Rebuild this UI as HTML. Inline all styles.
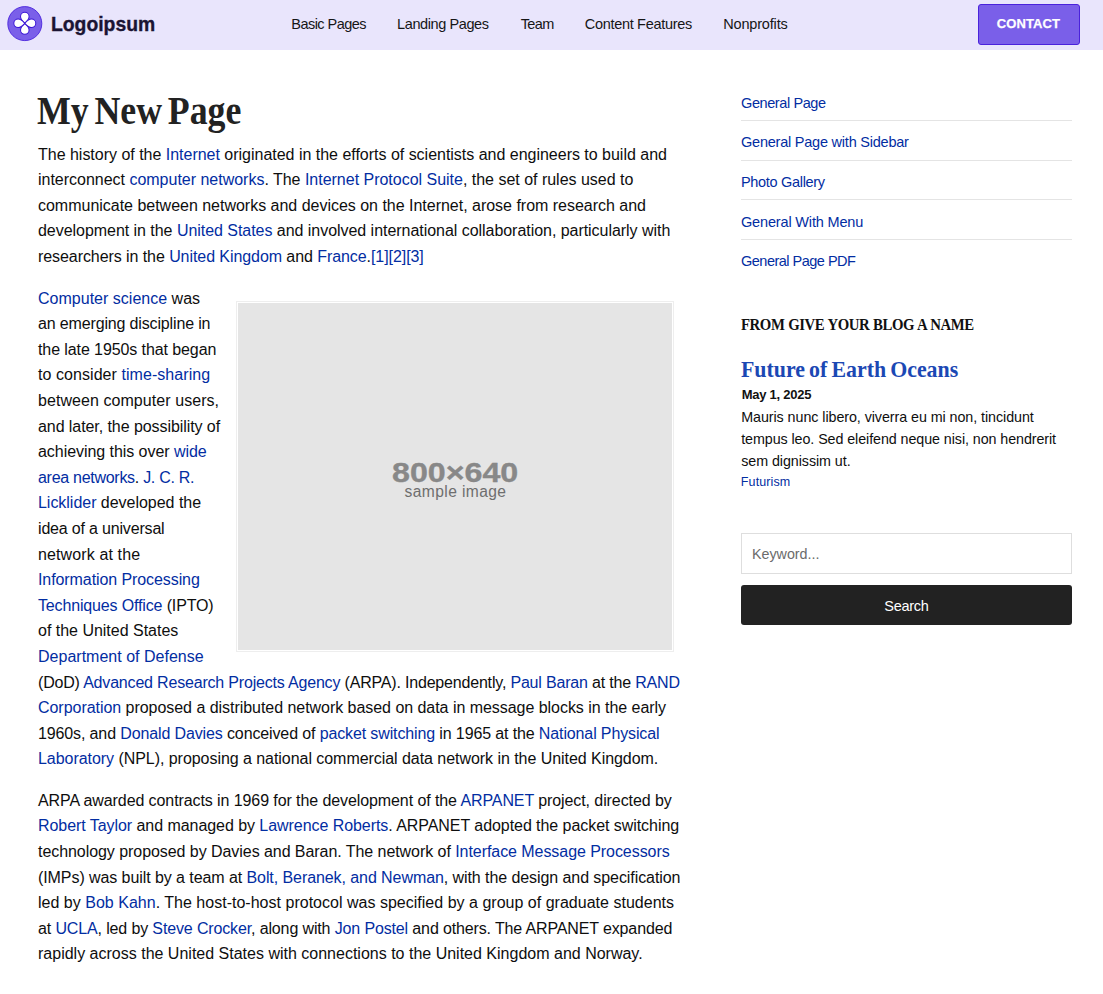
<!DOCTYPE html>
<html><head><meta charset="utf-8"><title>My New Page</title>
<style>
html,body{margin:0;padding:0;background:#ffffff;width:1103px;height:994px;overflow:hidden;position:relative}
.t{position:absolute;white-space:pre;line-height:1;}
.t a{color:#022da2;text-decoration:none}
</style></head><body>

<div style="position:absolute;left:0;top:0;width:1103px;height:50px;background:#e9e5fc"></div>
<svg style="position:absolute;left:0;top:0" width="50" height="50" viewBox="0 0 50 50">
  <circle cx="24.8" cy="23.6" r="17" fill="#7a5fe9" stroke="#4a22dc" stroke-width="0.9"/>
  <g fill="#ffffff" stroke="#3c18d6" stroke-width="1.1" transform="translate(24.8 23.3) scale(0.93) translate(-24.8 -23.6)">
    <path d="M24.8 23.6 C21.6 20.8 20.2 18.6 20.2 16.4 A4.6 4.6 0 0 1 29.4 16.4 C29.4 18.6 28 20.8 24.8 23.6Z"/>
    <path d="M24.8 23.6 C21.6 26.4 20.2 28.6 20.2 30.8 A4.6 4.6 0 0 0 29.4 30.8 C29.4 28.6 28 26.4 24.8 23.6Z"/>
    <path d="M24.8 23.6 C22 20.4 19.8 19 17.6 19 A4.6 4.6 0 0 0 17.6 28.2 C19.8 28.2 22 26.8 24.8 23.6Z"/>
    <path d="M24.8 23.6 C27.6 20.4 29.8 19 32 19 A4.6 4.6 0 0 1 32 28.2 C29.8 28.2 27.6 26.8 24.8 23.6Z"/>
  </g>
</svg>
<div style="position:absolute;left:978px;top:4px;width:100px;height:39px;background:#7a5fe9;border:1px solid #4a22dc;border-radius:3px"></div>
<div style="position:absolute;left:236px;top:301px;width:434px;height:347px;border:1px solid #eeeeee;padding:1px;background:#ffffff"><div style="width:434px;height:347px;background:#e5e5e5"></div></div>
<div style="position:absolute;left:741px;top:120px;width:331px;height:1px;background:#e4e4e4"></div>
<div style="position:absolute;left:741px;top:160px;width:331px;height:1px;background:#e4e4e4"></div>
<div style="position:absolute;left:741px;top:199px;width:331px;height:1px;background:#e4e4e4"></div>
<div style="position:absolute;left:741px;top:239px;width:331px;height:1px;background:#e4e4e4"></div>
<div style="position:absolute;left:741px;top:533px;width:329px;height:39px;border:1px solid #dedede;background:#fff"></div>
<div style="position:absolute;left:741px;top:585px;width:331px;height:40px;background:#222222;border-radius:3px"></div>

<div class="t" id="t0" style="left:50.98px;top:14.11px;font-family:'Liberation Sans', sans-serif;font-size:20.5px;font-weight:700;color:#1b1433;letter-spacing:0.000px;transform:scaleX(0.9432);transform-origin:0 0;-webkit-text-stroke:0.35px #1b1433;"><span class="mk" style="display:inline-block;width:0;height:0"></span><span class="sp">Logoipsum</span></div><div class="t" id="t1" style="left:291.28px;top:16.91px;font-family:'Liberation Sans', sans-serif;font-size:14.5px;font-weight:400;color:#161616;letter-spacing:-0.540px;"><span class="mk" style="display:inline-block;width:0;height:0"></span><span class="sp">Basic Pages</span></div><div class="t" id="t2" style="left:397.06px;top:16.91px;font-family:'Liberation Sans', sans-serif;font-size:14.5px;font-weight:400;color:#161616;letter-spacing:-0.400px;"><span class="mk" style="display:inline-block;width:0;height:0"></span><span class="sp">Landing Pages</span></div><div class="t" id="t3" style="left:520.72px;top:16.91px;font-family:'Liberation Sans', sans-serif;font-size:14.5px;font-weight:400;color:#161616;letter-spacing:-0.600px;"><span class="mk" style="display:inline-block;width:0;height:0"></span><span class="sp">Team</span></div><div class="t" id="t4" style="left:584.78px;top:16.91px;font-family:'Liberation Sans', sans-serif;font-size:14.5px;font-weight:400;color:#161616;letter-spacing:-0.307px;"><span class="mk" style="display:inline-block;width:0;height:0"></span><span class="sp">Content Features</span></div><div class="t" id="t5" style="left:723.28px;top:16.91px;font-family:'Liberation Sans', sans-serif;font-size:14.5px;font-weight:400;color:#161616;letter-spacing:-0.178px;"><span class="mk" style="display:inline-block;width:0;height:0"></span><span class="sp">Nonprofits</span></div><div class="t" id="t6" style="left:996.86px;top:17.31px;font-family:'Liberation Sans', sans-serif;font-size:13px;font-weight:700;color:#ffffff;letter-spacing:0.067px;-webkit-text-stroke:0.25px #ffffff;"><span class="mk" style="display:inline-block;width:0;height:0"></span><span class="sp">CONTACT</span></div><div class="t" id="t7" style="left:37.28px;top:90.90px;font-family:'Liberation Serif', serif;font-size:39px;font-weight:700;color:#222222;letter-spacing:0.000px;transform:scaleX(0.9180);transform-origin:0 0;word-spacing:-3.5px;"><span class="mk" style="display:inline-block;width:0;height:0"></span><span class="sp">My New Page</span></div><div class="t" id="t8" style="left:38.00px;top:146.60px;font-family:'Liberation Sans', sans-serif;font-size:16px;font-weight:400;color:#0e0e0e;letter-spacing:-0.015px;"><span class="mk" style="display:inline-block;width:0;height:0"></span><span class="sp">The history of the <a>Internet</a> originated in the efforts of scientists and engineers to build and</span></div><div class="t" id="t9" style="left:38.00px;top:172.20px;font-family:'Liberation Sans', sans-serif;font-size:16px;font-weight:400;color:#0e0e0e;letter-spacing:-0.014px;"><span class="mk" style="display:inline-block;width:0;height:0"></span><span class="sp">interconnect <a>computer networks</a>. The <a>Internet Protocol Suite</a>, the set of rules used to</span></div><div class="t" id="t10" style="left:38.00px;top:197.81px;font-family:'Liberation Sans', sans-serif;font-size:16px;font-weight:400;color:#0e0e0e;letter-spacing:-0.015px;"><span class="mk" style="display:inline-block;width:0;height:0"></span><span class="sp">communicate between networks and devices on the Internet, arose from research and</span></div><div class="t" id="t11" style="left:38.00px;top:223.40px;font-family:'Liberation Sans', sans-serif;font-size:16px;font-weight:400;color:#0e0e0e;letter-spacing:-0.040px;"><span class="mk" style="display:inline-block;width:0;height:0"></span><span class="sp">development in the <a>United States</a> and involved international collaboration, particularly with</span></div><div class="t" id="t12" style="left:38.00px;top:249.01px;font-family:'Liberation Sans', sans-serif;font-size:16px;font-weight:400;color:#0e0e0e;letter-spacing:-0.072px;"><span class="mk" style="display:inline-block;width:0;height:0"></span><span class="sp">researchers in the <a>United Kingdom</a> and <a>France</a>.<a>[1]</a><a>[2]</a><a>[3]</a></span></div><div class="t" id="t13" style="left:38.00px;top:290.60px;font-family:'Liberation Sans', sans-serif;font-size:16px;font-weight:400;color:#0e0e0e;letter-spacing:0.011px;"><span class="mk" style="display:inline-block;width:0;height:0"></span><span class="sp"><a>Computer science</a> was</span></div><div class="t" id="t14" style="left:38.00px;top:316.20px;font-family:'Liberation Sans', sans-serif;font-size:16px;font-weight:400;color:#0e0e0e;letter-spacing:-0.150px;"><span class="mk" style="display:inline-block;width:0;height:0"></span><span class="sp">an emerging discipline in</span></div><div class="t" id="t15" style="left:38.00px;top:341.81px;font-family:'Liberation Sans', sans-serif;font-size:16px;font-weight:400;color:#0e0e0e;letter-spacing:-0.092px;"><span class="mk" style="display:inline-block;width:0;height:0"></span><span class="sp">the late 1950s that began</span></div><div class="t" id="t16" style="left:38.00px;top:367.40px;font-family:'Liberation Sans', sans-serif;font-size:16px;font-weight:400;color:#0e0e0e;letter-spacing:0.061px;"><span class="mk" style="display:inline-block;width:0;height:0"></span><span class="sp">to consider <a>time-sharing</a></span></div><div class="t" id="t17" style="left:38.00px;top:393.01px;font-family:'Liberation Sans', sans-serif;font-size:16px;font-weight:400;color:#0e0e0e;letter-spacing:0.064px;"><span class="mk" style="display:inline-block;width:0;height:0"></span><span class="sp">between computer users,</span></div><div class="t" id="t18" style="left:38.00px;top:418.60px;font-family:'Liberation Sans', sans-serif;font-size:16px;font-weight:400;color:#0e0e0e;letter-spacing:-0.071px;"><span class="mk" style="display:inline-block;width:0;height:0"></span><span class="sp">and later, the possibility of</span></div><div class="t" id="t19" style="left:38.00px;top:444.20px;font-family:'Liberation Sans', sans-serif;font-size:16px;font-weight:400;color:#0e0e0e;letter-spacing:-0.052px;"><span class="mk" style="display:inline-block;width:0;height:0"></span><span class="sp">achieving this over <a>wide</a></span></div><div class="t" id="t20" style="left:38.00px;top:469.81px;font-family:'Liberation Sans', sans-serif;font-size:16px;font-weight:400;color:#0e0e0e;letter-spacing:-0.282px;"><span class="mk" style="display:inline-block;width:0;height:0"></span><span class="sp"><a>area networks</a>. <a>J. C. R.</a></span></div><div class="t" id="t21" style="left:38.00px;top:495.40px;font-family:'Liberation Sans', sans-serif;font-size:16px;font-weight:400;color:#0e0e0e;letter-spacing:-0.027px;"><span class="mk" style="display:inline-block;width:0;height:0"></span><span class="sp"><a>Licklider</a> developed the</span></div><div class="t" id="t22" style="left:38.00px;top:521.01px;font-family:'Liberation Sans', sans-serif;font-size:16px;font-weight:400;color:#0e0e0e;letter-spacing:-0.178px;"><span class="mk" style="display:inline-block;width:0;height:0"></span><span class="sp">idea of a universal</span></div><div class="t" id="t23" style="left:38.00px;top:546.60px;font-family:'Liberation Sans', sans-serif;font-size:16px;font-weight:400;color:#0e0e0e;letter-spacing:0.123px;"><span class="mk" style="display:inline-block;width:0;height:0"></span><span class="sp">network at the</span></div><div class="t" id="t24" style="left:38.00px;top:572.20px;font-family:'Liberation Sans', sans-serif;font-size:16px;font-weight:400;color:#0e0e0e;letter-spacing:-0.086px;"><span class="mk" style="display:inline-block;width:0;height:0"></span><span class="sp"><a>Information Processing</a></span></div><div class="t" id="t25" style="left:38.00px;top:597.81px;font-family:'Liberation Sans', sans-serif;font-size:16px;font-weight:400;color:#0e0e0e;letter-spacing:-0.148px;"><span class="mk" style="display:inline-block;width:0;height:0"></span><span class="sp"><a>Techniques Office</a> (IPTO)</span></div><div class="t" id="t26" style="left:38.00px;top:623.40px;font-family:'Liberation Sans', sans-serif;font-size:16px;font-weight:400;color:#0e0e0e;letter-spacing:-0.011px;"><span class="mk" style="display:inline-block;width:0;height:0"></span><span class="sp">of the United States</span></div><div class="t" id="t27" style="left:38.00px;top:649.01px;font-family:'Liberation Sans', sans-serif;font-size:16px;font-weight:400;color:#0e0e0e;letter-spacing:0.010px;"><span class="mk" style="display:inline-block;width:0;height:0"></span><span class="sp"><a>Department of Defense</a></span></div><div class="t" id="t28" style="left:38.00px;top:674.60px;font-family:'Liberation Sans', sans-serif;font-size:16px;font-weight:400;color:#0e0e0e;letter-spacing:-0.186px;"><span class="mk" style="display:inline-block;width:0;height:0"></span><span class="sp">(DoD) <a>Advanced Research Projects Agency</a> (ARPA). Independently, <a>Paul Baran</a> at the <a>RAND</a></span></div><div class="t" id="t29" style="left:38.00px;top:700.20px;font-family:'Liberation Sans', sans-serif;font-size:16px;font-weight:400;color:#0e0e0e;letter-spacing:-0.040px;"><span class="mk" style="display:inline-block;width:0;height:0"></span><span class="sp"><a>Corporation</a> proposed a distributed network based on data in message blocks in the early</span></div><div class="t" id="t30" style="left:38.00px;top:725.81px;font-family:'Liberation Sans', sans-serif;font-size:16px;font-weight:400;color:#0e0e0e;letter-spacing:-0.126px;"><span class="mk" style="display:inline-block;width:0;height:0"></span><span class="sp">1960s, and <a>Donald Davies</a> conceived of <a>packet switching</a> in 1965 at the <a>National Physical</a></span></div><div class="t" id="t31" style="left:38.00px;top:751.40px;font-family:'Liberation Sans', sans-serif;font-size:16px;font-weight:400;color:#0e0e0e;letter-spacing:-0.048px;"><span class="mk" style="display:inline-block;width:0;height:0"></span><span class="sp"><a>Laboratory</a> (NPL), proposing a national commercial data network in the United Kingdom.</span></div><div class="t" id="t32" style="left:38.00px;top:792.81px;font-family:'Liberation Sans', sans-serif;font-size:16px;font-weight:400;color:#0e0e0e;letter-spacing:-0.089px;"><span class="mk" style="display:inline-block;width:0;height:0"></span><span class="sp">ARPA awarded contracts in 1969 for the development of the <a>ARPANET</a> project, directed by</span></div><div class="t" id="t33" style="left:38.00px;top:818.40px;font-family:'Liberation Sans', sans-serif;font-size:16px;font-weight:400;color:#0e0e0e;letter-spacing:-0.056px;"><span class="mk" style="display:inline-block;width:0;height:0"></span><span class="sp"><a>Robert Taylor</a> and managed by <a>Lawrence Roberts</a>. ARPANET adopted the packet switching</span></div><div class="t" id="t34" style="left:38.00px;top:844.01px;font-family:'Liberation Sans', sans-serif;font-size:16px;font-weight:400;color:#0e0e0e;letter-spacing:-0.058px;"><span class="mk" style="display:inline-block;width:0;height:0"></span><span class="sp">technology proposed by Davies and Baran. The network of <a>Interface Message Processors</a></span></div><div class="t" id="t35" style="left:38.00px;top:869.60px;font-family:'Liberation Sans', sans-serif;font-size:16px;font-weight:400;color:#0e0e0e;letter-spacing:-0.076px;"><span class="mk" style="display:inline-block;width:0;height:0"></span><span class="sp">(IMPs) was built by a team at <a>Bolt, Beranek, and Newman</a>, with the design and specification</span></div><div class="t" id="t36" style="left:38.00px;top:895.20px;font-family:'Liberation Sans', sans-serif;font-size:16px;font-weight:400;color:#0e0e0e;letter-spacing:0.014px;"><span class="mk" style="display:inline-block;width:0;height:0"></span><span class="sp">led by <a>Bob Kahn</a>. The host-to-host protocol was specified by a group of graduate students</span></div><div class="t" id="t37" style="left:38.00px;top:920.81px;font-family:'Liberation Sans', sans-serif;font-size:16px;font-weight:400;color:#0e0e0e;letter-spacing:-0.136px;"><span class="mk" style="display:inline-block;width:0;height:0"></span><span class="sp">at <a>UCLA</a>, led by <a>Steve Crocker</a>, along with <a>Jon Postel</a> and others. The ARPANET expanded</span></div><div class="t" id="t38" style="left:38.00px;top:946.40px;font-family:'Liberation Sans', sans-serif;font-size:16px;font-weight:400;color:#0e0e0e;letter-spacing:0.002px;"><span class="mk" style="display:inline-block;width:0;height:0"></span><span class="sp">rapidly across the United States with connections to the United Kingdom and Norway.</span></div><div class="t" id="t39" style="left:741.00px;top:95.71px;font-family:'Liberation Sans', sans-serif;font-size:14.5px;font-weight:400;color:#022da2;letter-spacing:-0.400px;"><span class="mk" style="display:inline-block;width:0;height:0"></span><span class="sp">General Page</span></div><div class="t" id="t40" style="left:741.00px;top:135.32px;font-family:'Liberation Sans', sans-serif;font-size:14.5px;font-weight:400;color:#022da2;letter-spacing:-0.225px;"><span class="mk" style="display:inline-block;width:0;height:0"></span><span class="sp">General Page with Sidebar</span></div><div class="t" id="t41" style="left:741.00px;top:174.91px;font-family:'Liberation Sans', sans-serif;font-size:14.5px;font-weight:400;color:#022da2;letter-spacing:-0.317px;"><span class="mk" style="display:inline-block;width:0;height:0"></span><span class="sp">Photo Gallery</span></div><div class="t" id="t42" style="left:741.00px;top:214.51px;font-family:'Liberation Sans', sans-serif;font-size:14.5px;font-weight:400;color:#022da2;letter-spacing:-0.163px;"><span class="mk" style="display:inline-block;width:0;height:0"></span><span class="sp">General With Menu</span></div><div class="t" id="t43" style="left:741.00px;top:254.10px;font-family:'Liberation Sans', sans-serif;font-size:14.5px;font-weight:400;color:#022da2;letter-spacing:-0.507px;"><span class="mk" style="display:inline-block;width:0;height:0"></span><span class="sp">General Page PDF</span></div><div class="t" id="t44" style="left:741.14px;top:316.90px;font-family:'Liberation Serif', serif;font-size:15.7px;font-weight:700;color:#111111;letter-spacing:0.000px;transform:scaleX(0.9425);transform-origin:0 0;letter-spacing:-0.45px;word-spacing:0.5px;"><span class="mk" style="display:inline-block;width:0;height:0"></span><span class="sp">FROM GIVE YOUR BLOG A NAME</span></div><div class="t" id="t45" style="left:741.14px;top:358.31px;font-family:'Liberation Serif', serif;font-size:23px;font-weight:700;color:#1b48b4;letter-spacing:0.000px;transform:scaleX(0.9518);transform-origin:0 0;word-spacing:-1.5px;"><span class="mk" style="display:inline-block;width:0;height:0"></span><span class="sp">Future of Earth Oceans</span></div><div class="t" id="t46" style="left:741.64px;top:388.41px;font-family:'Liberation Sans', sans-serif;font-size:13px;font-weight:700;color:#111111;letter-spacing:-0.240px;"><span class="mk" style="display:inline-block;width:0;height:0"></span><span class="sp">May 1, 2025</span></div><div class="t" id="t47" style="left:741.20px;top:410.22px;font-family:'Liberation Sans', sans-serif;font-size:14.3px;font-weight:400;color:#0e0e0e;letter-spacing:-0.064px;"><span class="mk" style="display:inline-block;width:0;height:0"></span><span class="sp">Mauris nunc libero, viverra eu mi non, tincidunt</span></div><div class="t" id="t48" style="left:741.20px;top:431.97px;font-family:'Liberation Sans', sans-serif;font-size:14.3px;font-weight:400;color:#0e0e0e;letter-spacing:-0.078px;"><span class="mk" style="display:inline-block;width:0;height:0"></span><span class="sp">tempus leo. Sed eleifend neque nisi, non hendrerit</span></div><div class="t" id="t49" style="left:741.20px;top:453.72px;font-family:'Liberation Sans', sans-serif;font-size:14.3px;font-weight:400;color:#0e0e0e;letter-spacing:-0.062px;"><span class="mk" style="display:inline-block;width:0;height:0"></span><span class="sp">sem dignissim ut.</span></div><div class="t" id="t50" style="left:740.84px;top:475.70px;font-family:'Liberation Sans', sans-serif;font-size:12.5px;font-weight:400;color:#022da2;letter-spacing:0.114px;"><span class="mk" style="display:inline-block;width:0;height:0"></span><span class="sp">Futurism</span></div><div class="t" id="t51" style="left:752.06px;top:546.81px;font-family:'Liberation Sans', sans-serif;font-size:14.3px;font-weight:400;color:#6b6b6b;letter-spacing:-0.022px;"><span class="mk" style="display:inline-block;width:0;height:0"></span><span class="sp">Keyword...</span></div><div class="t" id="t52" style="left:884.28px;top:598.51px;font-family:'Liberation Sans', sans-serif;font-size:14.5px;font-weight:400;color:#ffffff;letter-spacing:-0.280px;"><span class="mk" style="display:inline-block;width:0;height:0"></span><span class="sp">Search</span></div><div class="t" id="t53" style="left:392.34px;top:458.60px;font-family:'Liberation Sans', sans-serif;font-size:27.4px;font-weight:700;color:#888888;letter-spacing:0.000px;transform:scaleX(1.1755);transform-origin:0 0;-webkit-text-stroke:0.35px #888888;"><span class="mk" style="display:inline-block;width:0;height:0"></span><span class="sp">800×640</span></div><div class="t" id="t54" style="left:404.56px;top:483.90px;font-family:'Liberation Sans', sans-serif;font-size:15.6px;font-weight:400;color:#6e6e6e;letter-spacing:0.400px;"><span class="mk" style="display:inline-block;width:0;height:0"></span><span class="sp">sample image</span></div>
</body></html>
